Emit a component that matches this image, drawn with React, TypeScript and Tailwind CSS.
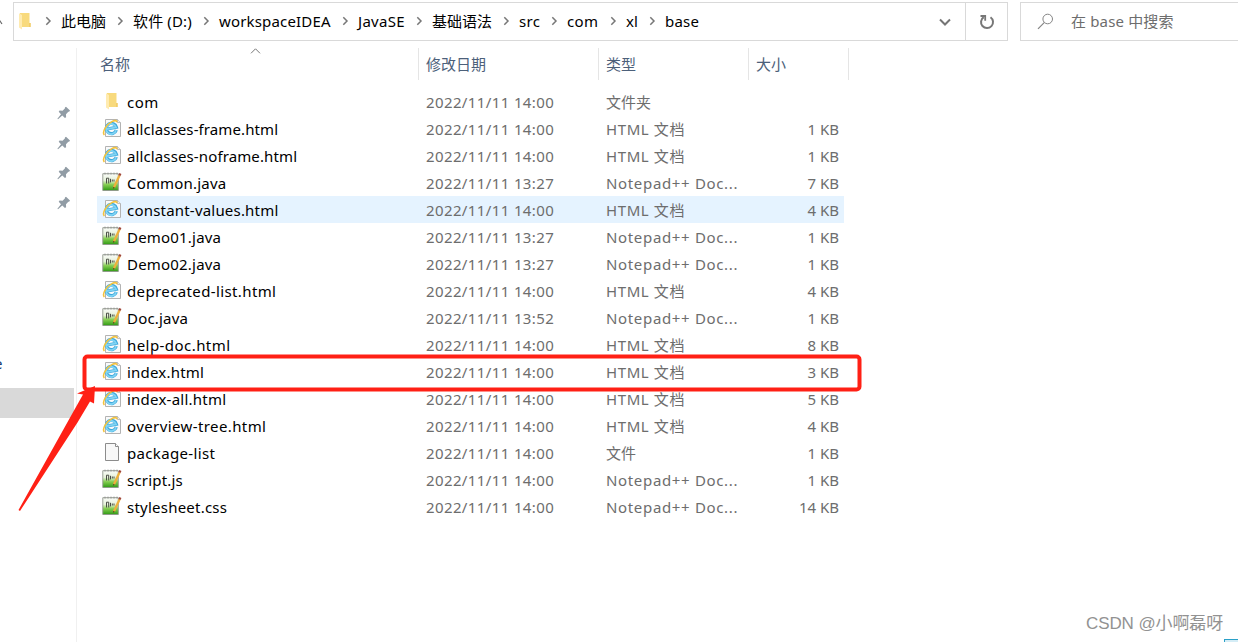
import type { ReactNode } from 'react';
import clsx from 'clsx';

type FileKind = 'folder' | 'html' | 'npp' | 'blank';

const crumbs = [
  { label: '此电脑', width: 'w-[45px]' },
  { label: '软件 (D:)', width: 'w-[59px] tracking-[0.01em]' },
  { label: 'workspaceIDEA', width: 'w-[112px] tracking-[0.17px]' },
  { label: 'JavaSE', width: 'w-[47px] tracking-[0.02em]' },
  { label: '基础语法', width: 'w-[60px]' },
  { label: 'src', width: 'w-[21px] tracking-[0.02em]' },
  { label: 'com', width: 'w-[32px] tracking-[0.02em]' },
  { label: 'xl', width: 'w-[12px]' },
  { label: 'base', width: 'w-[36px] tracking-[0.015em]' },
];

const typeNames: Record<FileKind, string> = {
  folder: '文件夹',
  html: 'HTML 文档',
  npp: 'Notepad++ Doc...',
  blank: '文件',
};

const typeTracking: Record<FileKind, string> = {
  folder: '',
  html: 'tracking-[0.6px]',
  npp: 'tracking-[0.66px]',
  blank: '',
};

const files: { name: string; kind: FileKind; time: string; size?: string; tracking?: string; hovered?: boolean }[] = [
  { name: 'com', kind: 'folder', time: '14:00', tracking: 'tracking-[0.5px]' },
  { name: 'allclasses-frame.html', kind: 'html', time: '14:00', size: '1 KB', tracking: 'tracking-[0.1px]' },
  { name: 'allclasses-noframe.html', kind: 'html', time: '14:00', size: '1 KB', tracking: 'tracking-[0.12px]' },
  { name: 'Common.java', kind: 'npp', time: '13:27', size: '7 KB', tracking: 'tracking-[0.18px]' },
  { name: 'constant-values.html', kind: 'html', time: '14:00', size: '4 KB', tracking: 'tracking-[0.2px]', hovered: true },
  { name: 'Demo01.java', kind: 'npp', time: '13:27', size: '1 KB', tracking: 'tracking-[0.2px]' },
  { name: 'Demo02.java', kind: 'npp', time: '13:27', size: '1 KB', tracking: 'tracking-[0.2px]' },
  { name: 'deprecated-list.html', kind: 'html', time: '14:00', size: '4 KB', tracking: 'tracking-[0.38px]' },
  { name: 'Doc.java', kind: 'npp', time: '13:52', size: '1 KB', tracking: 'tracking-[0.2px]' },
  { name: 'help-doc.html', kind: 'html', time: '14:00', size: '8 KB', tracking: 'tracking-[0.44px]' },
  { name: 'index.html', kind: 'html', time: '14:00', size: '3 KB', tracking: 'tracking-[0.2px]' },
  { name: 'index-all.html', kind: 'html', time: '14:00', size: '5 KB', tracking: 'tracking-[0.23px]' },
  { name: 'overview-tree.html', kind: 'html', time: '14:00', size: '4 KB', tracking: 'tracking-[0.4px]' },
  { name: 'package-list', kind: 'blank', time: '14:00', size: '1 KB', tracking: 'tracking-[0.34px]' },
  { name: 'script.js', kind: 'npp', time: '14:00', size: '1 KB', tracking: 'tracking-[0.2px]' },
  { name: 'stylesheet.css', kind: 'npp', time: '14:00', size: '14 KB', tracking: 'tracking-[0.23px]' },
];

function FolderIcon() {
  return (
    <svg width="20" height="20" viewBox="0 0 20 20">
      <path d="M5 2h9.5v14H5z" fill="#f8da7d" />
      <path d="M14 12h1.8v4H14z" fill="#f2cd69" />
      <path d="M4 2.3 7 4v14.5L4 16.5z" fill="#ffebb0" />
    </svg>
  );
}

function HtmlIcon() {
  return (
    <svg width="20" height="20" viewBox="0 0 20 20">
      <path d="M3.5 1.5h12l3 3v14h-15z" fill="#fafafa" stroke="#b3b3b3" />
      <path d="M15.5 1.5v3h3" fill="#eee" stroke="#b3b3b3" strokeWidth=".8" />
      <g transform="rotate(-10 9 10.5)">
        <path d="M14 13a5.2 5.2 0 1 1 .6-2.7H5" fill="none" stroke="#3fa8dc" strokeWidth="3.2" />
        <path d="M13.8 13a5.1 5.1 0 1 1 .4-2.7H5" fill="none" stroke="#7fd4f4" strokeWidth="1.8" />
      </g>
      <path d="M2.4 17C-.4 14.2 4.6 6.2 10.3 3.4c2.6-1.3 4.6-1 4.6.8" fill="none" stroke="#f3c23c" strokeWidth="1.6" />
    </svg>
  );
}

function NotepadIcon() {
  return (
    <svg width="20" height="20" viewBox="0 0 20 20">
      <defs>
        <linearGradient id="npp" x1="0" y1="0" x2="0" y2="1">
          <stop offset="0" stopColor="#fafcf8" />
          <stop offset=".4" stopColor="#e6f1da" />
          <stop offset=".65" stopColor="#86cf52" />
          <stop offset="1" stopColor="#2f9a14" />
        </linearGradient>
      </defs>
      <path d="M.8 1.7h15.5v16.8H.8z" fill="url(#npp)" stroke="#8f968a" strokeWidth=".9" />
      <path d="M3 .6v2M6 .6v2M9 .6v2M12 .6v2M15 .6v2" stroke="#888" strokeWidth=".8" />
      <path d="M4.5 11.5V6.2h2.2v5.3M8.5 6.8v3.6M10.3 7.5v2M12 7.5v2" fill="none" stroke="#4a4e45" strokeWidth="1" />
      <path d="m12 15.3 5.6-12" stroke="#eeb03c" strokeWidth="2.3" />
      <path d="m17.4 3.6 1-2.2" stroke="#a0463a" strokeWidth="2.3" />
      <path d="m11 17 .2-2.2 1.6.8z" fill="#6b4b25" />
    </svg>
  );
}

function BlankIcon() {
  return (
    <svg width="20" height="20" viewBox="0 0 20 20">
      <path d="M3.5 1.5h10l3 3v14h-13z" fill="#f8f8f8" stroke="#8c8c8c" />
      <path d="M13.5 1.5v3h3" fill="#fff" stroke="#8c8c8c" />
    </svg>
  );
}

const icons: Record<FileKind, ReactNode> = {
  folder: <FolderIcon />,
  html: <HtmlIcon />,
  npp: <NotepadIcon />,
  blank: <BlankIcon />,
};

function Chevron() {
  return (
    <svg className="ml-[10px] mr-[9px] shrink-0" width="7" height="10" viewBox="0 0 7 10">
      <path d="m1.3 1.2 3.7 3.8-3.7 3.8" fill="none" stroke="#777" strokeWidth="1.5" />
    </svg>
  );
}

function Pin() {
  return (
    <svg width="14" height="14" viewBox="0 0 14 14">
      <path d="M9 .8 13 4.6l-.9 1.2-.8-.1-2.3 2.5.1 3-1.2.8-2.6-2.6L1 13.3l-.6-.6L4 8.2 1.7 5.8l.9-1.2 3 .1L8 2.3l-.1-.8z" fill="#919ca5" />
    </svg>
  );
}

function AddressBar() {
  return (
    <header className="flex h-[46px] items-start pt-[2px]">
      <div className="flex h-[39px] w-[13px] items-center">
        <svg width="3" height="6" viewBox="0 0 3 6">
          <path d="M-2 5 0 2l2 3" fill="none" stroke="#666" strokeWidth="1.2" />
        </svg>
      </div>
      <div className="flex h-[39px] w-[995px] shrink-0 border border-[#d9d9d9]">
        <div className="flex flex-1 items-center pb-px">
          <div className="ml-px w-[20px]">
            <FolderIcon />
          </div>
          {crumbs.map((crumb) => (
            <div key={crumb.label} className="flex items-center">
              <Chevron />
              <span className={clsx('mr-px whitespace-nowrap leading-5', crumb.width)}>{crumb.label}</span>
            </div>
          ))}
        </div>
        <div className="flex w-[40px] items-center justify-center">
          <svg width="12" height="8" viewBox="0 0 12 8">
            <path d="m1 1.5 5 5 5-5" fill="none" stroke="#757575" strokeWidth="2" />
          </svg>
        </div>
        <div className="flex w-[42px] items-center justify-center border-l border-[#d9d9d9]">
          <svg width="16" height="16" viewBox="0 0 16 16">
            <path d="M4.7 3.1a6 6 0 1 0 6.8.1" fill="none" stroke="#777" strokeWidth="2" />
            <path d="M1.5 2h4.7v4.8" fill="none" stroke="#777" strokeWidth="1.8" />
          </svg>
        </div>
      </div>
      <div className="ml-3 flex h-[39px] flex-1 items-center border border-r-0 border-[#d9d9d9] text-[#6d6d6d]">
        <svg className="ml-4 mr-[17px]" width="17" height="17" viewBox="0 0 17 17">
          <circle cx="10.7" cy="6" r="4.8" fill="none" stroke="#858585" />
          <path d="M7.2 9.6 1 15.8" stroke="#858585" strokeWidth="1.2" />
        </svg>
        <span className="tracking-[0.15px]">在 base 中搜索</span>
      </div>
    </header>
  );
}

function Sidebar() {
  return (
    <aside className="flex w-[77px] shrink-0 flex-col">
      <div className="mt-[2px] flex flex-1 flex-col border-r border-[#f0f0f0]">
        <div className="mt-[58px] flex flex-col gap-4 pl-[57px]">
          <Pin />
          <Pin />
          <Pin />
          <Pin />
        </div>
        <div className="mt-[145px] h-5 w-1">
          <span className="-ml-[6px] block leading-4 text-[#173b73]">e</span>
        </div>
        <div className="mt-[13px] h-[30px] w-[74px] bg-[#d9d9d9]" />
      </div>
    </aside>
  );
}

function FileTable() {
  return (
    <main>
      <div className="mt-[2px] grid h-8 w-[772px] grid-cols-[342px_180px_150px_100px] text-[#4c607a]">
        <div className="relative border-r border-[#e5e5e5] pl-[23px] leading-8">
          名称
          <svg className="absolute left-[173px] top-0" width="11" height="6" viewBox="0 0 11 6">
            <path d="m1 5.3 4.5-4.5L10 5.3" fill="none" stroke="#777" />
          </svg>
        </div>
        <div className="border-r border-[#e5e5e5] pl-[7px] leading-8">修改日期</div>
        <div className="border-r border-[#e5e5e5] pl-[7px] leading-8">类型</div>
        <div className="border-r border-[#e5e5e5] pl-[7px] leading-8">大小</div>
      </div>
      <div className="ml-5 mt-2 w-[747px]">
        {files.map((file) => (
          <div
            key={file.name}
            className={clsx(
              'grid h-[27px] grid-cols-[30px_299px_180px_150px_83px] items-center whitespace-nowrap text-[#6d6d6d]',
              file.hovered && 'bg-[#e5f3ff]',
            )}
          >
            <div className="-mt-px pl-[5px]">{icons[file.kind]}</div>
            <div className={clsx('pt-0.5 text-black', file.tracking)}>{file.name}</div>
            <div className="pt-0.5 tracking-[0.38px]">2022/11/11 {file.time}</div>
            <div className={clsx('pt-0.5', typeTracking[file.kind])}>{typeNames[file.kind]}</div>
            <div className="pt-0.5 text-right">{file.size}</div>
          </div>
        ))}
      </div>
    </main>
  );
}

// Red marker and arrow drawn over the index.html row.
function Annotation() {
  return (
    <svg className="pointer-events-none absolute left-0 top-0" width="870" height="520" viewBox="0 0 870 520">
      <rect x="84.5" y="356.5" width="775" height="33" rx="3" fill="none" stroke="#ff2015" strokeWidth="4" />
      <path d="m18.5 510 52.7-94.5L83 394.5l-6-1L95 386l-1 17.5-4-2-12.5 21L20 511z" fill="#ff2015" />
    </svg>
  );
}

export default function App() {
  return (
    <div className="relative flex h-[642px] w-[1238px] flex-col overflow-hidden bg-white font-['Noto_Sans','Noto_Sans_CJK_SC',sans-serif] text-[15px]">
      <AddressBar />
      <div className="flex flex-1">
        <Sidebar />
        <FileTable />
      </div>
      <Annotation />
      <div className="absolute left-[1086px] top-[612px] whitespace-nowrap font-['Liberation_Sans','Noto_Sans_CJK_SC',sans-serif] text-[17px] leading-6 tracking-[-0.1px] text-[#929292]">
        CSDN @小啊磊呀
      </div>
      <div className="absolute bottom-0 right-0 h-[3px] w-[14px] border-l border-t border-[#2aa0c8] bg-[#d5edf6]" />
    </div>
  );
}
